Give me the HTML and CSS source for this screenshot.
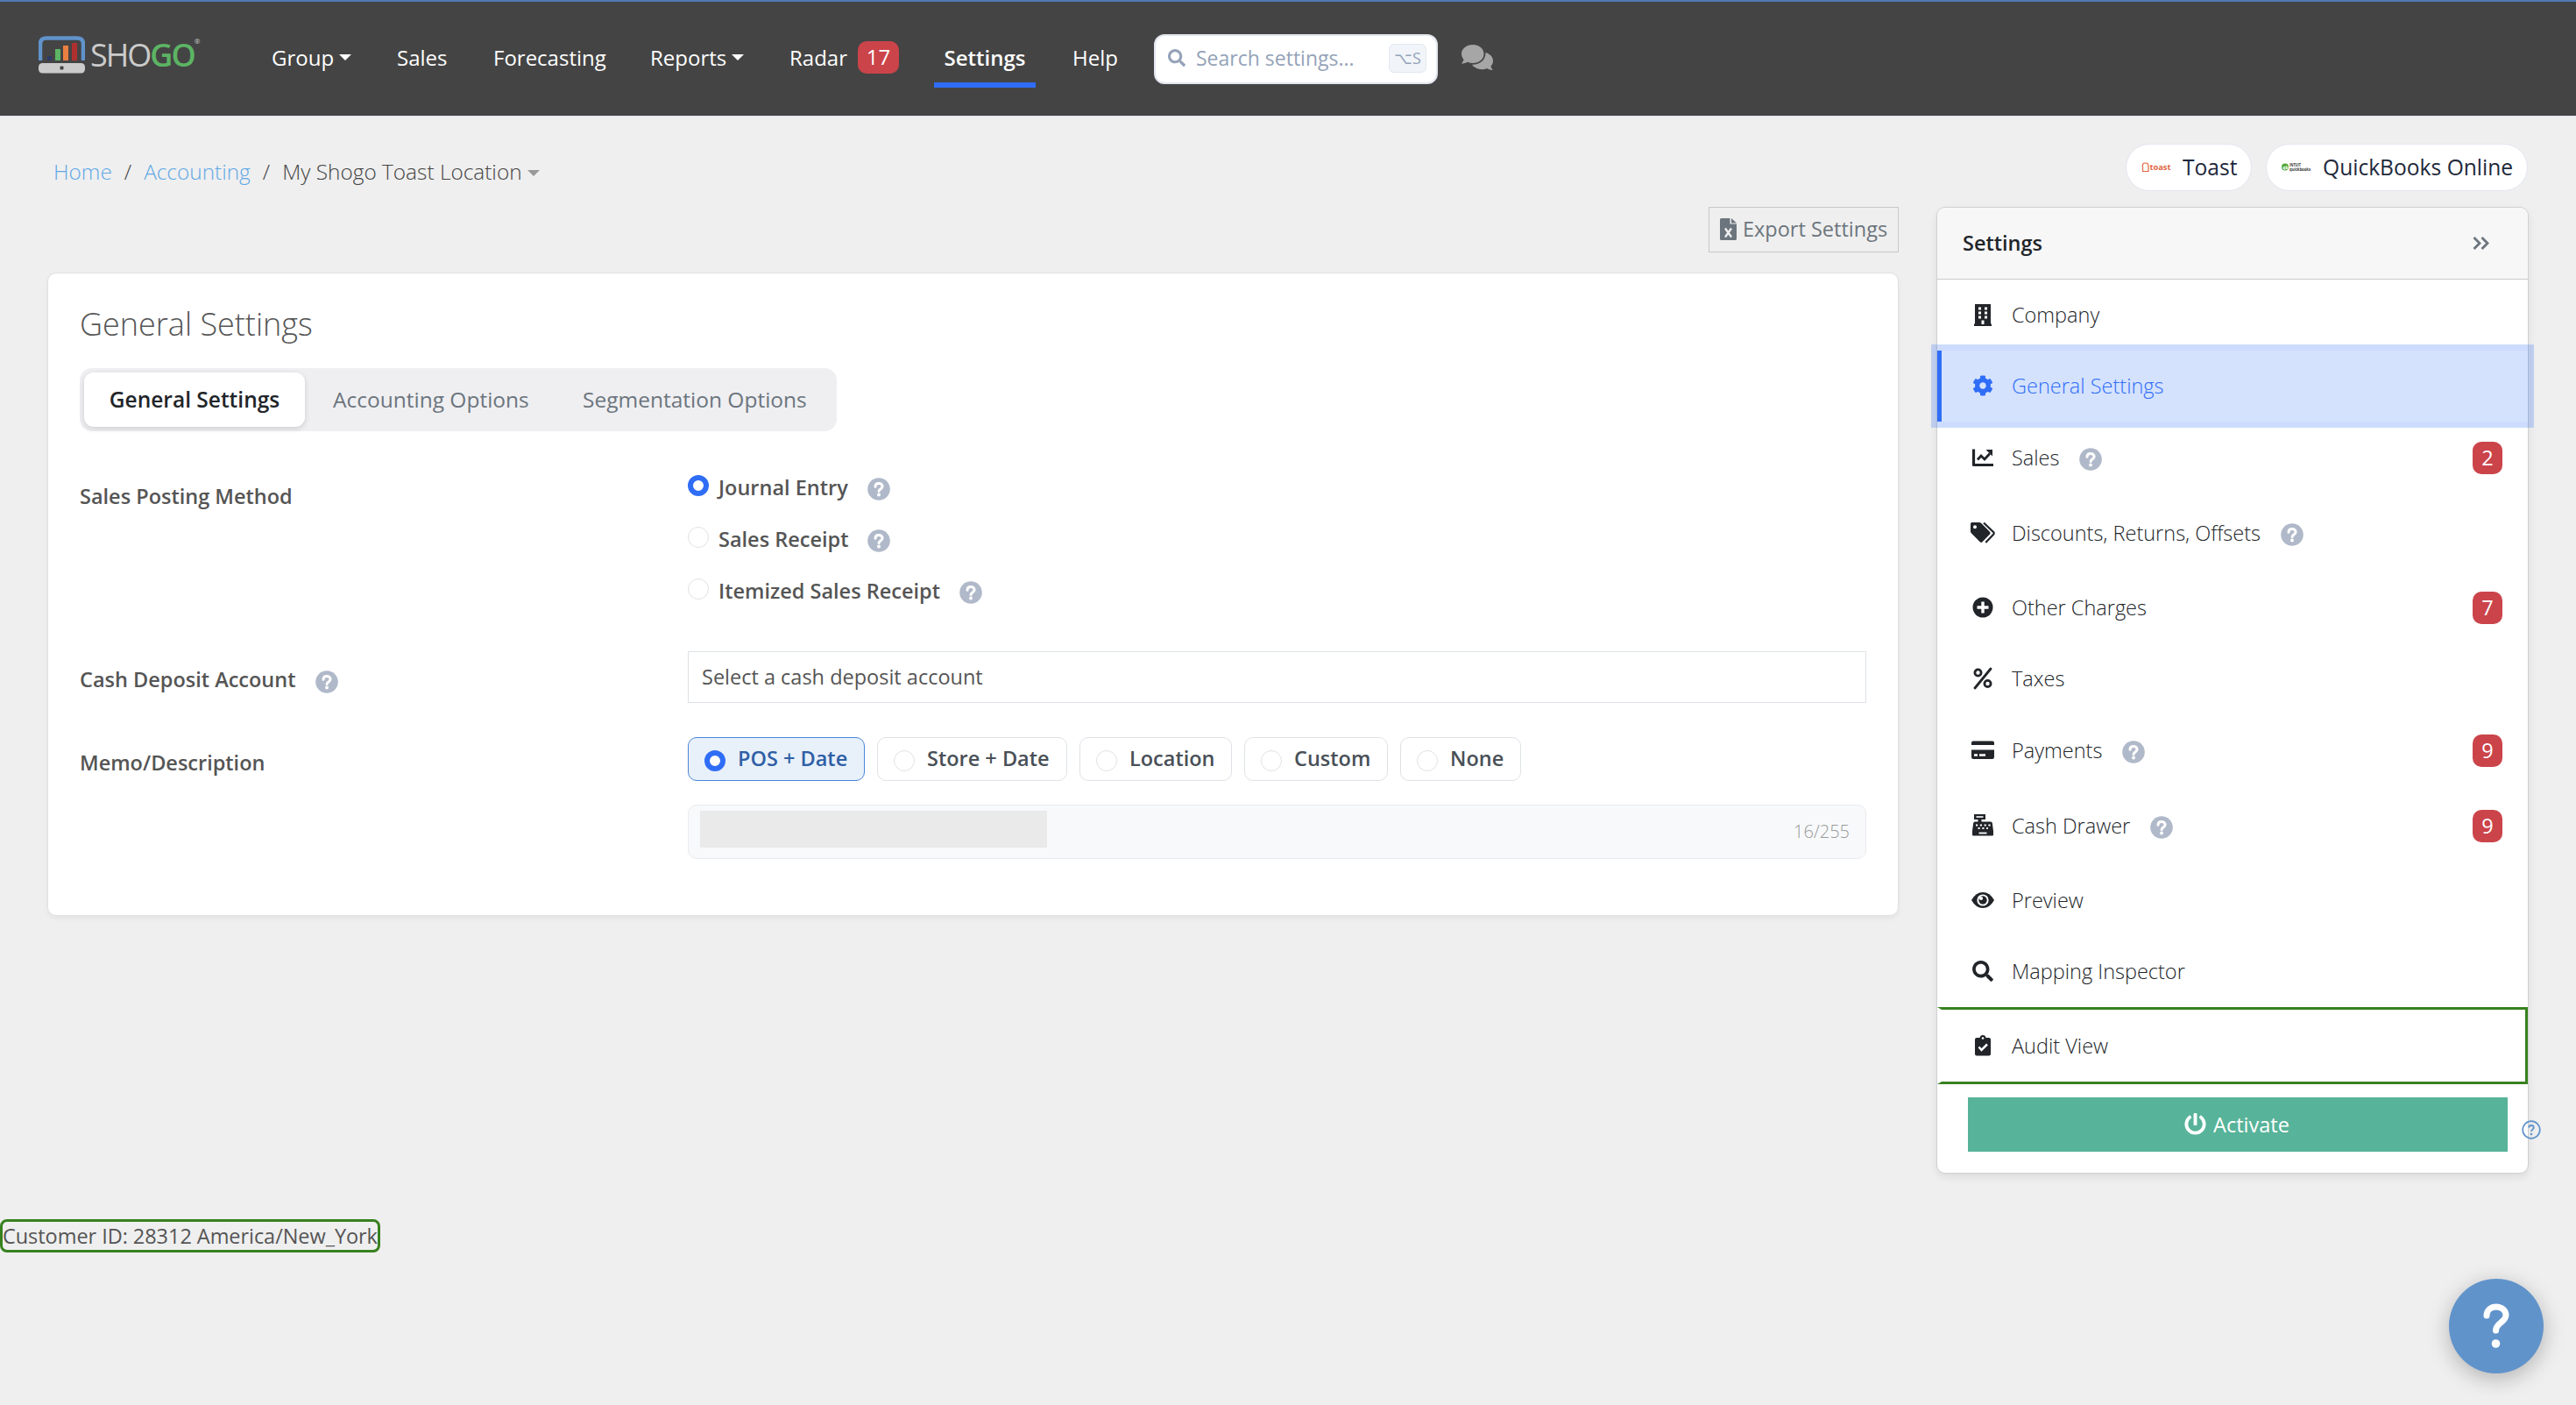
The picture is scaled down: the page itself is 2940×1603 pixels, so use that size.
FILE: index.html
```html
<!DOCTYPE html>
<html lang="en">
<head>
    <meta charset="UTF-8">
    <meta name="viewport" content="width=device-width, initial-scale=1.0">
    <title>Shogo - General Settings</title>
    <link rel="stylesheet" href="styles.css">
</head>
<body>
    <!-- shared icons -->
    <svg width="0" height="0" class="sprite">
        <symbol id="help" viewBox="0 0 26 26">
            <circle cx="13" cy="13" r="12.8" fill="#b0b9c9"/>
            <path d="M9 10.2C9 7.8 10.700 6.400 13 6.400s4.100 1.500 4.100 3.600c0 2.900-4 2.900-4 5.400" fill="none" stroke="#fff" stroke-width="3" stroke-linecap="round"/>
            <circle cx="13" cy="19.500" r="2" fill="#fff"/>
        </symbol>
        <symbol id="search" viewBox="0 0 512 512">
            <path d="M505 442.700L405.300 343c-4.500-4.500-10.600-7-17-7H372c27.600-35.300 44-79.700 44-128C416 93.100 322.900 0 208 0S0 93.100 0 208s93.100 208 208 208c48.300 0 92.700-16.400 128-44v16.300c0 6.400 2.500 12.500 7 17l99.700 99.700c9.400 9.400 24.600 9.400 33.900 0l28.300-28.300c9.400-9.400 9.400-24.600.1-34zM208 336c-70.700 0-128-57.200-128-128 0-70.700 57.200-128 128-128 70.700 0 128 57.200 128 128 0 70.700-57.200 128-128 128z" fill="currentColor"/>
        </symbol>
    </svg>

    <header class="navbar">
        <a class="logo">
            <svg class="logo-mark" viewBox="0 0 53 43">
                <path d="M2 28V9Q2 2.500 9 2.500H44Q51 2.500 51 9V28" fill="none" stroke="#6193cb" stroke-width="4.500"/>
                <rect x="10" y="23" width="5" height="5" fill="#2f3a68"/>
                <rect x="19" y="15" width="6" height="13" fill="#5cb464"/>
                <rect x="28" y="11" width="6" height="17" fill="#ea7f42"/>
                <rect x="38" y="8" width="6" height="20" fill="#b03030"/>
                <rect x="0" y="31" width="53" height="11.500" rx="4.500" fill="#cbcbcb"/>
                <rect x="24.500" y="34.500" width="4" height="4" rx="1" fill="#444"/>
            </svg>
            <span class="logo-text">SHO<b>GO</b></span><sup>®</sup>
        </a>
        <nav class="nav">
            <a class="nav-group">Group<i class="caret"></i></a>
            <a class="nav-sales">Sales</a>
            <a class="nav-forecasting">Forecasting</a>
            <a class="nav-reports">Reports<i class="caret"></i></a>
            <a class="nav-radar">Radar<span class="badge">17</span></a>
            <a class="nav-settings active">Settings</a>
            <a class="nav-help">Help</a>
        </nav>
        <div class="search">
            <svg class="search-icon"><use href="#search"/></svg>
            <span>Search settings...</span>
            <kbd>⌥S</kbd>
        </div>
        <svg class="chat" viewBox="0 0 36 29">
            <path d="M13 0C20 0 25.500 4.500 25.500 10.500S20 21 13 21c-2.200 0-4.200-.4-6-1.200C5 21 2.500 21.600 0 21.600c1.300-1.600 2.300-3.300 2.500-4.800C1 15 0 12.900 0 10.500 0 4.500 6 0 13 0z" fill="#a6a6a6"/>
            <path d="M27.500 9C32.500 10.300 36 14 36 18.500c0 2.400-.9 4.400-2.500 6 .3 1.500 1.200 3.100 2.500 4.500-2.500 0-5-.8-7-2-1.600.8-3.500 1.200-5.500 1.200-5 0-9.500-2.300-11.500-5.400 9 .2 15.800-5.600 15.500-13.800z" fill="#a6a6a6"/>
        </svg>
    </header>

    <div class="topbar">
        <div class="breadcrumb">
            <a>Home</a><span class="sep">/</span><a>Accounting</a><span class="sep">/</span><span>My Shogo Toast Location</span><i class="caret"></i>
        </div>
        <div class="pills">
            <div class="pill pill-toast">
                <svg class="brand" viewBox="0 0 34 12">
                    <path d="M1.500 10.500V5.500Q.5 1 4.500 1Q8.500 1 8 5.500V10.500Z" fill="none" stroke="#e0643f" stroke-width="1.200"/>
                    <text x="9.500" y="9" font-size="9" font-weight="700" textLength="24" lengthAdjust="spacingAndGlyphs" fill="#e0643f">toast</text>
                </svg>
                Toast
            </div>
            <div class="pill pill-qb">
                <svg class="brand" viewBox="0 0 34 12">
                    <circle cx="4" cy="5.500" r="4" fill="#52a838"/>
                    <text x="1.300" y="7.500" font-size="5" font-weight="700" fill="#fff">qb</text>
                    <text x="9" y="4.800" font-size="4.500" font-weight="700" textLength="13" lengthAdjust="spacingAndGlyphs" fill="#333">INTUIT</text>
                    <text x="9" y="9.600" font-size="5.500" font-weight="700" textLength="24" lengthAdjust="spacingAndGlyphs" fill="#333">quickbooks</text>
                </svg>
                QuickBooks Online
            </div>
        </div>
    </div>

    <div class="content">
        <main>
            <button class="export">
                <svg viewBox="0 0 19 25">
                    <path d="M1.500 0H11.500V6.500H19V23.500Q19 25 17.500 25H1.500Q0 25 0 23.500V1.500Q0 0 1.500 0ZM13 0L19 5.500H13Z" fill="#6c757d"/>
                    <path d="M6 11.500L13 21.500M13 11.500L6 21.500" stroke="#efefef" stroke-width="2.300"/>
                </svg>
                Export Settings
            </button>

            <section class="card">
                <h1>General Settings</h1>
                <div class="tabs">
                    <a class="tab tab-general active">General Settings</a>
                    <a class="tab tab-accounting">Accounting Options</a>
                    <a class="tab tab-segmentation">Segmentation Options</a>
                </div>

                <div class="row row-posting">
                    <label>Sales Posting Method</label>
                    <div>
                        <div class="option"><i class="radio checked"></i>Journal Entry<svg class="help"><use href="#help"/></svg></div>
                        <div class="option"><i class="radio"></i>Sales Receipt<svg class="help"><use href="#help"/></svg></div>
                        <div class="option"><i class="radio"></i>Itemized Sales Receipt<svg class="help"><use href="#help"/></svg></div>
                    </div>
                </div>

                <div class="row row-cash">
                    <label>Cash Deposit Account<svg class="help"><use href="#help"/></svg></label>
                    <div class="select">Select a cash deposit account</div>
                </div>

                <div class="row row-memo">
                    <label>Memo/Description</label>
                    <div>
                        <div class="chips">
                            <span class="chip active chip-pos"><i class="radio checked"></i>POS + Date</span>
                            <span class="chip chip-store"><i class="radio"></i>Store + Date</span>
                            <span class="chip chip-location"><i class="radio"></i>Location</span>
                            <span class="chip chip-custom"><i class="radio"></i>Custom</span>
                            <span class="chip chip-none"><i class="radio"></i>None</span>
                        </div>
                        <div class="memo">
                            <div class="memo-value"></div>
                            <span class="count">16/255</span>
                        </div>
                    </div>
                </div>
            </section>
        </main>

        <aside class="sidebar">
            <div class="sidebar-head">
                Settings
                <svg viewBox="0 0 19 15"><path d="M1.500 1L8 7.500L1.500 14M10.500 1L17 7.500L10.500 14" fill="none" stroke="#6c757d" stroke-width="2.800"/></svg>
            </div>
            <a class="item">
                <svg class="icon" viewBox="0 0 28 28"><path d="M5 2H23V24.500H24V27H4V24.500H5Z"/><path d="M9 5.500h3v3H9zM16 5.500h3v3h-3zM9 10.500h3v3H9zM16 10.500h3v3h-3zM9 15.500h3v3H9zM16 15.500h3v3h-3zM12.500 20.500h3V25h-3z" fill="#fff"/></svg>
                Company
            </a>
            <a class="item active">
                <svg class="icon" viewBox="-45 -45 602 602"><path d="M487.400 315.700l-42.600-24.600c4.300-23.200 4.300-47 0-70.200l42.600-24.600c4.900-2.800 7.100-8.600 5.500-14-11.100-35.600-30-67.800-54.700-94.600-3.800-4.100-10-5.100-14.800-2.300L380.800 110c-17.900-15.400-38.500-27.300-60.800-35.100V25.800c0-5.600-3.900-10.500-9.400-11.700-36.700-8.200-74.300-7.800-109.200 0-5.500 1.200-9.400 6.100-9.400 11.700V75c-22.200 7.900-42.800 19.800-60.800 35.100L88.700 85.500c-4.900-2.800-11-1.900-14.800 2.300-24.700 26.700-43.600 58.900-54.700 94.600-1.700 5.400.6 11.200 5.500 14L67.300 221c-4.300 23.200-4.300 47 0 70.200l-42.600 24.600c-4.900 2.800-7.100 8.600-5.500 14 11.100 35.600 30 67.800 54.700 94.600 3.800 4.100 10 5.100 14.800 2.300l42.600-24.600c17.900 15.400 38.500 27.300 60.800 35.100v49.200c0 5.600 3.900 10.500 9.400 11.700 36.700 8.200 74.300 7.800 109.200 0 5.500-1.200 9.400-6.100 9.400-11.700v-49.200c22.200-7.900 42.800-19.800 60.800-35.100l42.600 24.600c4.900 2.800 11 1.900 14.800-2.300 24.700-26.700 43.600-58.900 54.700-94.600 1.500-5.500-.7-11.300-5.600-14.100zM256 336c-44.100 0-80-35.900-80-80s35.900-80 80-80 80 35.900 80 80-35.900 80-80 80z"/></svg>
                General Settings
            </a>
            <a class="item with-help">
                <svg class="icon" viewBox="0 0 28 28"><path d="M3.500 4.500V22.500H26" fill="none" stroke="#212529" stroke-width="3.200" stroke-linejoin="round"/><path d="M8 16.500L12 12L16 16L22 9.500" fill="none" stroke="#212529" stroke-width="2.800"/><path d="M17.500 5H25V12.500Z"/></svg>
                Sales<svg class="help"><use href="#help"/></svg>
                <span class="badge">2</span>
            </a>
            <a class="item with-help">
                <svg class="icon" viewBox="0 0 28 28"><path d="M0 3.500Q0 2 1.500 2H10Q11.200 2 12 2.800L22 12.800Q23.300 14.200 22 15.600L13.500 24.300Q12 25.600 10.700 24.300L.8 14.300Q0 13.400 0 12.300Z"/><circle cx="5" cy="7.200" r="2" fill="#fff"/><path d="M15 2.500L26.500 13.500Q27 14.500 26.300 15.500L17.300 25" fill="none" stroke="#212529" stroke-width="2.200"/></svg>
                Discounts, Returns, Offsets<svg class="help"><use href="#help"/></svg>
            </a>
            <a class="item">
                <svg class="icon" viewBox="0 0 28 28"><circle cx="14" cy="14" r="11.500"/><path d="M14 7.500V20.500M7.500 14H20.500" stroke="#fff" stroke-width="3.400"/></svg>
                Other Charges
                <span class="badge">7</span>
            </a>
            <a class="item">
                <svg class="icon" viewBox="0 0 28 28"><g fill="none" stroke="#212529" stroke-width="2.800"><circle cx="8.500" cy="7.500" r="3.600"/><circle cx="19.500" cy="20" r="3.600"/><path d="M5 25L23 3" stroke-linecap="round"/></g></svg>
                Taxes
            </a>
            <a class="item with-help">
                <svg class="icon" viewBox="0 0 28 28"><path d="M3 3.500H25Q27 3.500 27 5.500V8H1V5.500Q1 3.500 3 3.500ZM1 13.500H27V21.500Q27 24 25 24H3Q1 24 1 21.500Z"/><path d="M4 19.500H8M10 19.500H17" stroke="#fff" stroke-width="2.400"/></svg>
                Payments<svg class="help"><use href="#help"/></svg>
                <span class="badge">9</span>
            </a>
            <a class="item with-help">
                <svg class="icon" viewBox="0 0 28 28"><path d="M4 1H17V7H12.500V9.500H23Q24.500 9.500 24.800 11L26 20V24.500Q26 25.500 25 25.500H3Q2 25.500 2 24.500V20L3.200 11Q3.500 9.500 5 9.500H8.500V7H4Z"/><path d="M6.500 4H14.500" stroke="#fff" stroke-width="1.600"/><path d="M6 13.500H23M8.500 17H20" stroke="#fff" stroke-width="2" stroke-dasharray="2.200 2.600"/><path d="M9.500 22.500H18.500" stroke="#fff" stroke-width="1.800"/></svg>
                Cash Drawer<svg class="help"><use href="#help"/></svg>
                <span class="badge">9</span>
            </a>
            <a class="item">
                <svg class="icon" viewBox="0 0 28 28"><path d="M1 14Q6 5 14 5T27 14Q22 23 14 23T1 14Z"/><circle cx="14" cy="14" r="6.600" fill="#fff"/><circle cx="14" cy="14" r="4.700"/><circle cx="12" cy="12" r="2.100" fill="#fff"/></svg>
                Preview
            </a>
            <a class="item">
                <svg class="icon" viewBox="-45 -45 602 602"><use href="#search" width="512" height="512"/></svg>
                Mapping Inspector
            </a>
            <a class="item audit">
                <svg class="icon" viewBox="0 0 28 28"><path d="M7 5H10.500Q11 2 14 2T17.500 5H21Q23 5 23 7V23.500Q23 25.500 21 25.500H7Q5 25.500 5 23.500V7Q5 5 7 5Z"/><circle cx="14" cy="5.500" r="1.300" fill="#fff"/><path d="M9.500 15.500L12.500 19L19 12.500" fill="none" stroke="#fff" stroke-width="2.500"/></svg>
                Audit View
            </a>
            <div class="sidebar-foot">
                <button class="activate">
                    <svg viewBox="0 0 512 512"><path fill="#fff" d="M400 54.100c63 45 104 118.600 104 201.900 0 136.800-110.800 247.700-247.500 248C120 504.300 8.200 393 8 256.400 7.900 173.100 48.900 99.300 111.800 54.200c11.700-8.300 28-4.800 35 7.700L162.600 90c5.900 10.500 3.100 23.800-6.600 31-41.500 30.800-68 79.600-68 134.900-.1 92.300 74.500 168.100 168 168.100 91.600 0 168.600-74.200 168-169.100-.3-51.800-24.700-101.800-68.100-134-9.700-7.200-12.400-20.500-6.500-30.900l15.800-28.100c7-12.400 23.200-16.100 34.800-7.800zM296 264V24c0-13.300-10.700-24-24-24h-32c-13.300 0-24 10.700-24 24v240c0 13.300 10.700 24 24 24h32c13.300 0 24-10.700 24-24z"/></svg>
                    Activate
                </button>
                <svg class="activate-help" viewBox="0 0 22 22"><circle cx="11" cy="11" r="9.800" fill="none" stroke="#6193cb" stroke-width="1.700"/><path d="M8.200 8.500Q8.200 6 11 6T13.800 8.500C13.800 10.500 11 10.700 11 13" fill="none" stroke="#6193cb" stroke-width="1.800"/><circle cx="11" cy="16" r="1.300" fill="#6193cb"/></svg>
            </div>
        </aside>
    </div>

    <footer class="customer">Customer ID: 28312 America/New_York</footer>

    <div class="fab">
        <svg viewBox="0 0 30 52"><path d="M4 14C4 7.500 9 4 15 4S26 8 26 13.500C26 21.500 14.500 22 14.500 31" fill="none" stroke="#fff" stroke-width="7" stroke-linecap="round"/><circle cx="14.500" cy="46" r="4.800" fill="#fff"/></svg>
    </div>
</body>
</html>
```
FILE: styles.css
```css
* {
    box-sizing: border-box;
}
body {
    margin: 0;
    min-height: 1603px;
    background: #efefef;
    color: #555;
    font-family: "Open Sans", "Noto Sans", sans-serif;
    font-size: 23.500px;
}
button {
    font: inherit;
}
.sprite {
    display: block;
}
.caret {
    display: inline-block;
    border-left: 7px solid transparent;
    border-right: 7px solid transparent;
    border-top: 7px solid currentColor;
    margin-left: 6px;
    vertical-align: 5px;
}
.badge {
    background: #cb444a;
    color: #fff;
    border-radius: 10px;
    font-weight: 500;
    height: 37px;
    line-height: 36px;
    text-align: center;
}
.help {
    width: 26px;
    height: 26px;
    flex: none;
}

/* Navbar */
.navbar {
    display: flex;
    align-items: center;
    height: 133px;
    padding: 0 0 0 44px;
    background: #444;
    border-top: 2px solid #5079b3;
    border-bottom: 1px solid #e3e4ee;
}
.logo {
    display: flex;
    align-items: center;
    width: 266px;
    height: 43px;
    margin-top: -9px;
}
.logo-mark {
    width: 53px;
    height: 43px;
    margin-right: 6px;
}
.logo-text {
    margin-top: -1px;
    font-size: 36px;
    font-weight: 500;
    line-height: 43px;
    letter-spacing: -2px;
    color: #cbcbcb;
}
.logo-text b {
    color: #5cb464;
    font-weight: 600;
}
.logo sup {
    font-size: 8px;
    color: #ccc;
    align-self: flex-start;
}
.nav {
    display: flex;
    align-items: center;
    height: 66px;
    color: #fff;
    font-size: 24px;
    font-weight: 500;
}
.nav a {
    display: flex;
    align-items: center;
    white-space: nowrap;
    height: 66px;
    padding-bottom: 3px;
}
.nav-group { width: 143px; }
.nav-sales { width: 110px; }
.nav-forecasting { width: 179px; }
.nav-reports { width: 159px; }
.nav-radar { width: 165px; }
.nav-radar .badge {
    width: 47px;
    margin-left: 12px;
}
.nav .active {
    width: 116px;
    height: 66px;
    justify-content: center;
    font-weight: 600;
    box-shadow: inset 0 -6px #2f6df6;
    border-radius: 6px 6px 0 0;
}
.nav-help {
    margin-left: 42px;
    width: 93px;
}
.search {
    display: flex;
    align-items: center;
    width: 324px;
    height: 57px;
    padding: 0 11px 2px 14px;
    background: #fff;
    border: 2px solid #e2e6ee;
    border-radius: 12px;
    color: #94a3b8;
    font-size: 23px;
}
.search-icon {
    width: 20px;
    height: 20px;
    margin-right: 12px;
}
.search kbd {
    margin-left: auto;
    width: 43px;
    height: 33px;
    line-height: 30px;
    text-align: center;
    font-family: "Open Sans", "DejaVu Sans", sans-serif;
    font-size: 18px;
    background: #f1f5f9;
    border: 1px solid #e2e8f0;
    border-radius: 6px;
}
.chat {
    width: 36px;
    height: 29px;
    margin: -3px 0 0 27px;
}

/* Breadcrumb and connected systems */
.topbar {
    display: flex;
    justify-content: space-between;
    padding: 31px 55px 0 61px;
}
.breadcrumb {
    display: flex;
    align-items: center;
    height: 62px;
    font-size: 24.400px;
    font-weight: 300;
    color: #444;
}
.breadcrumb a {
    color: #5fa8e6;
}
.breadcrumb .sep {
    margin: 0 14px;
}
.breadcrumb .caret {
    color: #999;
    margin-left: 6px;
    margin-top: 5px;
}
.pills {
    display: flex;
    gap: 16px;
}
.pill {
    display: flex;
    align-items: center;
    height: 54px;
    padding: 0 17px 1px;
    background: #fff;
    border: 1px solid #e2e6f0;
    border-radius: 27px;
    color: #1e293b;
    font-size: 24.600px;
    white-space: nowrap;
}
.pill-toast { width: 144px; }
.pill-qb { width: 299px; }
.brand {
    width: 34px;
    height: 12px;
    margin-right: 13px;
    flex: none;
    overflow: visible;
}

.content {
    display: flex;
    align-items: flex-start;
    gap: 43px;
    padding: 10px 54px 0 54px;
}
main {
    flex: none;
    width: 2113px;
    display: flex;
    flex-direction: column;
}
.export {
    align-self: flex-end;
    display: flex;
    align-items: center;
    width: 217px;
    height: 52px;
    padding: 0 0 2px 12px;
    background: #efefef;
    border: 1px solid #c6c8ca;
    color: #6c757d;
    white-space: nowrap;
}
.export svg {
    width: 19px;
    height: 25px;
    margin-right: 7px;
}
.card {
    margin-top: 23px;
    height: 734px;
    padding: 34px 36px 0 36px;
    background: #fff;
    border: 1px solid #dfe1e4;
    border-radius: 10px;
    box-shadow: 0 3px 6px rgba(0, 0, 0, 0.05);
}
h1 {
    margin: 0 0 26px;
    font-size: 36px;
    line-height: 48px;
    font-weight: 300;
}

/* Tabs */
.tabs {
    display: flex;
    align-items: center;
    width: 864px;
    height: 72px;
    padding: 0 5px;
    background: #efeff2;
    border-radius: 14px;
    color: #6c757d;
    font-size: 24.500px;
}
.tab {
    line-height: 60px;
    white-space: nowrap;
}
.tab.active {
    width: 252px;
    height: 62px;
    line-height: 61px;
    text-align: center;
    background: #fff;
    border-radius: 11px;
    color: #212529;
    font-weight: 600;
    box-shadow: 0 2px 6px rgba(0, 0, 0, 0.14);
}
.tab-accounting {
    margin-left: 32px;
    width: 285px;
}

/* Form */
.row {
    display: grid;
    grid-template-columns: 694px 1fr;
}
label {
    display: flex;
    align-items: center;
    height: 48px;
    font-weight: 600;
}
label .help {
    margin: 6px 0 0 22px;
}
.row-posting { margin-top: 34px; }
.row-posting label { margin-top: 16px; }
.row-cash { margin-top: 40px; }
.row-cash label { margin-top: 8px; }
.row-memo { margin-top: 39px; }
.row-memo label { margin-top: 5px; }
.option {
    display: flex;
    align-items: center;
    height: 59px;
    font-weight: 600;
}
.option .help {
    margin: 5px 0 0 22px;
}
.radio {
    width: 24px;
    height: 24px;
    border: 1px solid #dee2e6;
    border-radius: 50%;
    background: #fff;
    flex: none;
}
.radio.checked {
    border: 6.500px solid #2f6df6;
}
.option .radio {
    margin: -3px 11px 0 0;
}
.select {
    height: 59px;
    padding-left: 15px;
    line-height: 57px;
    border: 1px solid #dee2e6;
}
.chips {
    display: flex;
    gap: 14px;
}
.chip {
    display: flex;
    align-items: center;
    height: 50px;
    padding: 0 0 2px 18px;
    border: 1px solid #dee2e6;
    border-radius: 10px;
    color: #495057;
    font-weight: 600;
    white-space: nowrap;
}
.chip.active {
    background: #e8f0fa;
    border-color: #4a86d8;
    color: #2f5fa5;
}
.chip .radio {
    margin: 6px 14px 0 0;
}
.chip-pos { width: 202px; }
.chip-store { width: 217px; }
.chip-location { width: 174px; }
.chip-custom { width: 164px; }
.chip-none { width: 138px; }
.memo {
    display: flex;
    justify-content: space-between;
    height: 62px;
    margin-top: 27px;
    padding: 6px 18px 0 13px;
    background: #f8f9fb;
    border: 1px solid #e9ebee;
    border-radius: 10px;
}
.memo-value {
    width: 396px;
    height: 42px;
    background: #eaeaea;
}
.count {
    font-size: 20px;
    font-weight: 300;
    line-height: 48px;
    color: #999;
}

/* Settings menu */
.sidebar {
    flex: none;
    width: 676px;
    background: #fff;
    border: 1px solid #ced0d2;
    border-radius: 10px;
    box-shadow: 0 4px 10px rgba(0, 0, 0, 0.08);
    color: #212529;
}
.sidebar-head {
    display: flex;
    align-items: center;
    justify-content: space-between;
    height: 82px;
    padding: 0 44px 1px 29px;
    background: #f7f7f8;
    border-bottom: 1px solid #c8cacc;
    border-radius: 10px 10px 0 0;
    font-weight: 600;
}
.sidebar-head svg {
    width: 19px;
    height: 15px;
}
.item {
    display: flex;
    align-items: center;
    height: 81px;
    padding: 0 29px 1px 38px;
    font-weight: 300;
}
.item.with-help {
    height: 86px;
    padding-bottom: 4px;
}
.item .icon {
    width: 28px;
    height: 28px;
    margin-right: 19px;
    fill: currentColor;
}
.item .help {
    margin: 4px 0 0 23px;
}
.item .badge {
    width: 34px;
    margin-left: auto;
}
.item.active {
    color: #2f6df6;
    background: #d4e2fd;
    border-left: 5px solid #2f6df6;
    padding-left: 33px;
    box-shadow: 0 0 0 7px rgba(47, 109, 246, 0.24);
}
.item.audit {
    height: 88px;
    border: 3px solid #37811f;
    border-left: 5px solid transparent;
    padding-left: 33px;
}
.sidebar-foot {
    display: flex;
    align-items: flex-start;
    height: 101px;
    padding: 15px 0 0 35px;
}
.activate {
    display: flex;
    align-items: center;
    justify-content: center;
    flex: none;
    width: 616px;
    height: 62px;
    padding: 0 2px 1px 0;
    border: 0;
    background: #57b399;
    color: #fff;
    font-weight: 500;
}
.activate svg {
    width: 25px;
    height: 25px;
    margin-right: 8px;
}
.activate-help {
    flex: none;
    width: 22px;
    height: 22px;
    margin: 26px 0 0 16px;
}

.customer {
    width: 434px;
    height: 38px;
    margin-top: 52px;
    line-height: 32px;
    letter-spacing: -0.050px;
    border: 3px solid #37811f;
    border-radius: 8px;
    white-space: nowrap;
}
.fab {
    position: fixed;
    right: 37px;
    bottom: 36px;
    display: flex;
    align-items: center;
    justify-content: center;
    width: 108px;
    height: 108px;
    border-radius: 50%;
    background: #6193cb;
    box-shadow: 0 6px 24px rgba(0, 0, 0, 0.25);
}
.fab svg {
    width: 30px;
    height: 52px;
}
```
